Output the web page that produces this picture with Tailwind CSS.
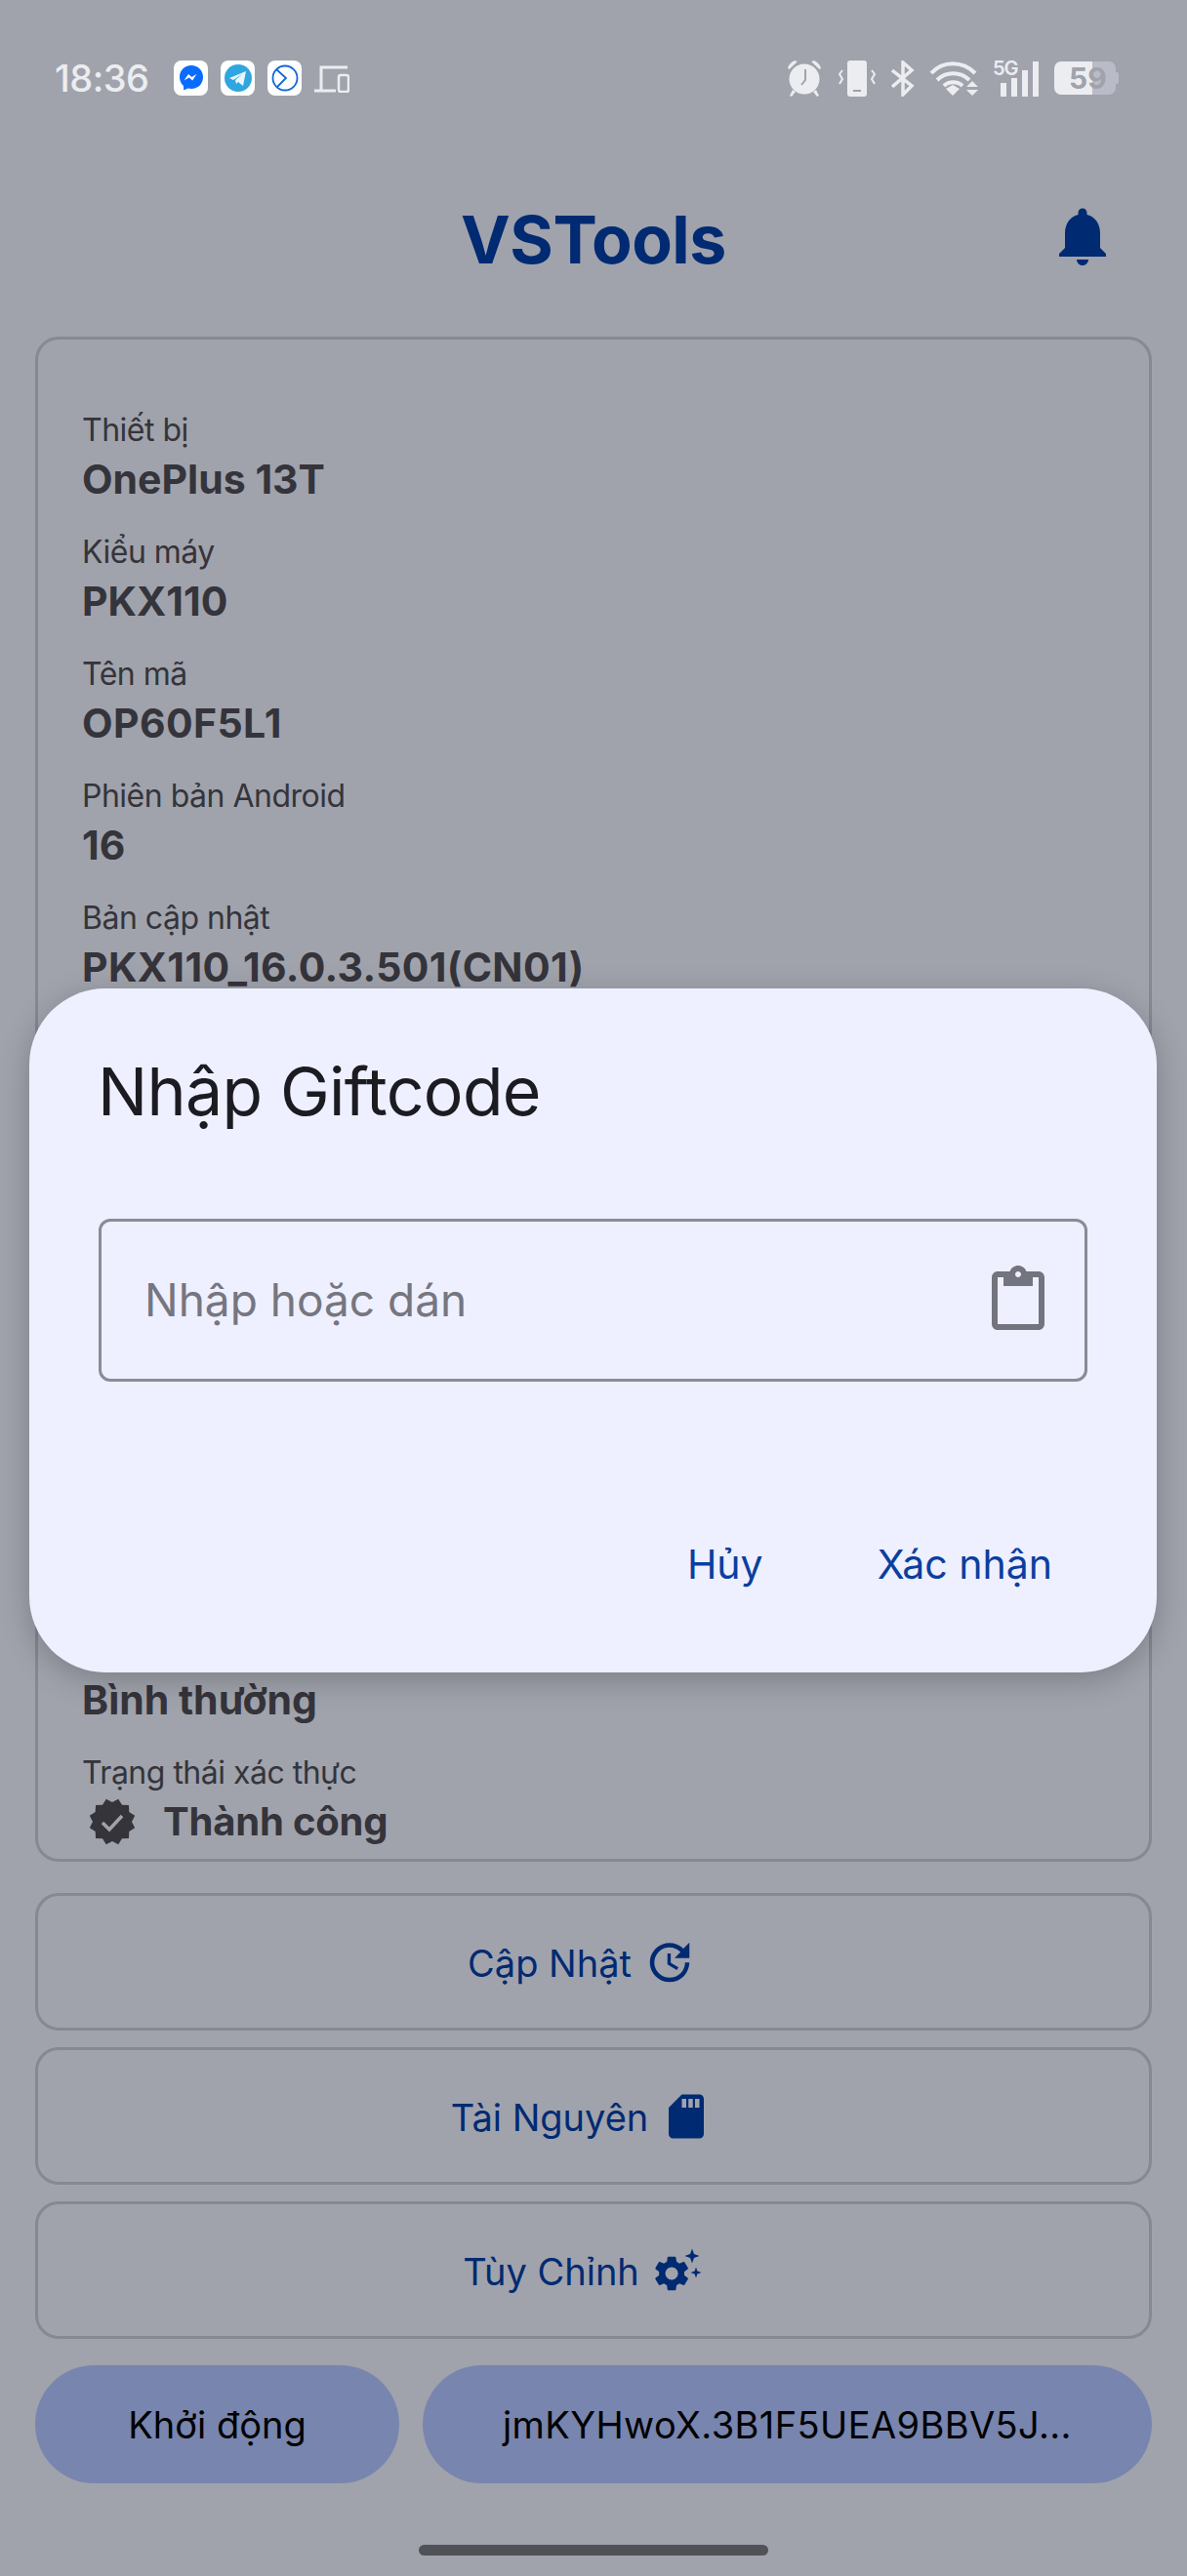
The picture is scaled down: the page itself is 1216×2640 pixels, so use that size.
<!DOCTYPE html>
<html lang="en">
<head>
    <meta charset="UTF-8">
    <meta name="viewport" content="width=device-width, initial-scale=1.0">
    <title>VSTools</title>
    <script src="https://cdn.jsdelivr.net/npm/@tailwindcss/browser@4"></script>
</head>
<body class="bg-[#a0a3ac] font-[Inter,sans-serif]">
<div class="relative w-[1216px] h-[2640px] overflow-hidden px-[36px]">

    <!-- Status bar -->
    <div class="h-[160px] flex items-center justify-between text-[#eceDf0] -mx-[36px] pl-[56px] pr-[70px]">
        <div class="flex items-center">
            <span class="text-[38px] font-medium leading-none w-[122px] tracking-[-0.5px]">18:36</span>
            <div class="flex items-center gap-[13px]">
                <div class="w-[35px] h-[36px] bg-white rounded-[8px] flex items-center justify-center">
                    <svg viewBox="0 0 26 28" class="w-[26px] h-[28px]"><path fill="#0a6cff" d="M13 1C6 1 1 6 1 13c0 3.700 1.500 6.800 4 9l.200 4.500 4.400-2c1.100.300 2.200.500 3.400.500 7 0 12-5 12-12S20 1 13 1z"/><path fill="#fff" d="M5.500 16.500 10 10l3.500 3 5-3.200-4.300 6.700-3.500-3z"/></svg>
                </div>
                <div class="w-[35px] h-[36px] bg-white rounded-[8px] flex items-center justify-center">
                    <svg viewBox="0 0 28 28" class="w-[28px] h-[28px]"><circle cx="14" cy="14" r="14" fill="#2fa6e0"/><path fill="#e8f5fc" d="M5 14 22 7l-3 15-5-4-2 2-1-4 7-6-9 6z"/></svg>
                </div>
                <div class="w-[35px] h-[36px] bg-white rounded-[8px] flex items-center justify-center">
                    <svg viewBox="0 0 28 30" class="w-[28px] h-[30px]" fill="none" stroke="#1467d6" stroke-width="1.800"><circle cx="14" cy="15" r="12.500"/><path d="M5 6l10 9-9 9"/></svg>
                </div>
                <svg viewBox="0 0 36 29" class="w-[36px] h-[29px]"><path fill="none" stroke="currentColor" stroke-width="3" d="M34 3H7v23"/><path fill="none" stroke="currentColor" stroke-width="3" d="M0 27h22"/><rect x="25" y="11" width="10" height="17" rx="2" fill="none" stroke="currentColor" stroke-width="2.500"/></svg>
            </div>
        </div>
        <div class="flex items-center">
            <svg viewBox="0 0 38 38" class="w-[38px] h-[38px]"><circle cx="19" cy="20" r="15.500" fill="currentColor"/><path d="M2 9c1-4 4-7 8-8l1.500 1.500L3.500 10zM36 9c-1-4-4-7-8-8l-1.500 1.500L34.500 10zM7 31l-3 6 2 1 4-5zM31 31l3 6-2 1-4-5z" fill="currentColor"/><path d="M20 10v11l-4 5" fill="none" stroke="#a0a3ac" stroke-width="2"/></svg>
            <svg viewBox="0 0 38 37" class="w-[38px] h-[37px] ml-[16px]"><rect x="9" y="0" width="20" height="37" rx="3" fill="currentColor"/><rect x="15" y="30" width="8" height="2" fill="#a0a3ac"/><path d="M4 10 1 14l3 5-3 5M34 10l3 4-3 5 3 5" fill="none" stroke="currentColor" stroke-width="2"/></svg>
            <svg viewBox="0 0 24 37" class="w-[24px] h-[37px] ml-[16px]"><path d="M1 10l20 16-9 9V2l9 8L1 27" fill="none" stroke="currentColor" stroke-width="3.500"/></svg>
            <svg viewBox="0 0 52 37" class="w-[52px] h-[37px] ml-[15px]"><path d="M2 13C14 0 34 0 47 13M8 20c9-9 24-9 33 0M15 26c5-5 14-5 19 0" fill="none" stroke="currentColor" stroke-width="4"/><path d="M17 29l7-4 7 4-7 7z" fill="currentColor"/><path d="M38 27l6-6 6 6zM38 30h12l-6 6z" fill="currentColor"/></svg>
            <div class="relative w-[47px] h-[37px] ml-[13px]">
                <span class="absolute -top-[2px] left-0 text-[20px] font-semibold leading-[20px] tracking-[-1px]">5G</span>
                <div class="absolute bottom-0 right-0 flex items-end gap-[5px]">
                    <div class="w-[6px] h-[14px] bg-current"></div>
                    <div class="w-[6px] h-[19px] bg-current"></div>
                    <div class="w-[6px] h-[27px] bg-current"></div>
                    <div class="w-[6px] h-[36px] bg-current"></div>
                </div>
            </div>
            <div class="relative w-[66px] h-[34px] ml-[16px] flex">
                <div class="w-[39px] h-full bg-[#eceDf0] rounded-l-[7px]"></div>
                <div class="w-[24px] h-full bg-[#b9bcc6] rounded-r-[7px]"></div>
                <div class="w-[3px] h-[12px] self-center bg-[#b9bcc6] rounded-r-[2px]"></div>
                <span class="absolute left-[15px] top-0 text-[30px] font-bold leading-[34px] text-[#a0a3ac]">59</span>
            </div>
        </div>
    </div>

    <!-- Header -->
    <div class="h-[170px] mb-[15px] grid grid-cols-[1fr_auto_1fr] items-center">
        <div></div>
        <h1 class="text-[68px] font-bold text-[#002a72] tracking-[-0.5px] leading-none">VSTools</h1>
        <div class="flex justify-end pr-[35px]">
            <svg viewBox="0 0 24 24" class="w-[72px] h-[72px] -mt-[6px]" fill="#002a72"><path d="M12 22c1.100 0 2-.9 2-2h-4c0 1.100.9 2 2 2zm6-6v-5c0-3.070-1.630-5.640-4.500-6.320V4c0-.83-.67-1.500-1.500-1.500s-1.500.67-1.500 1.500v.68C7.640 5.360 6 7.920 6 11v5l-2 2v1h16v-1l-2-2z"/></svg>
        </div>
    </div>

    <!-- Device info card -->
    <div class="h-[1563px] border-[3px] border-[#868892] rounded-[24px] pt-[68px] px-[45px] flex flex-col gap-[25px] text-[#35343b]">
        <div>
            <div class="text-[32px] leading-[50px] tracking-[-0.5px]">Thiết bị</div>
            <div class="text-[41px] font-bold leading-[50px]">OnePlus 13T</div>
        </div>
        <div>
            <div class="text-[32px] leading-[50px] tracking-[-0.5px]">Kiểu máy</div>
            <div class="text-[41px] font-bold leading-[50px]">PKX110</div>
        </div>
        <div>
            <div class="text-[32px] leading-[50px] tracking-[-0.5px]">Tên mã</div>
            <div class="text-[41px] font-bold leading-[50px] tracking-[0.4px]">OP60F5L1</div>
        </div>
        <div>
            <div class="text-[32px] leading-[50px] tracking-[-0.5px]">Phiên bản Android</div>
            <div class="text-[41px] font-bold leading-[50px]">16</div>
        </div>
        <div>
            <div class="text-[32px] leading-[50px] tracking-[-0.5px]">Bản cập nhật</div>
            <div class="text-[41px] font-bold leading-[50px] tracking-[0.35px]">PKX110_16.0.3.501(CN01)</div>
        </div>
        <!-- rows behind the dialog -->
        <div class="h-[726px] flex flex-col justify-end">
            <div class="text-[41px] font-bold leading-[50px]">Bình thường</div>
        </div>
        <div>
            <div class="text-[32px] leading-[48px] tracking-[-0.5px] mt-[1px]">Trạng thái xác thực</div>
            <div class="flex items-center gap-[27px] pl-[6px] mt-[1px]">
                <svg viewBox="0 0 48 48" class="w-[50px] h-[48px]"><polygon fill="#35343b" points="24,4 30.210,.82 34,6.680 40.970,7.030 41.320,14 47.180,17.790 44,24 47.180,30.210 41.320,34 40.970,40.970 34,41.320 30.210,47.180 24,44 17.790,47.180 14,41.320 7.030,40.970 6.680,34 .82,30.210 4,24 .82,17.790 6.680,14 7.030,7.030 14,6.680 17.790,.82"/><path d="M14 25l7 7 13-14" fill="none" stroke="#a0a3ac" stroke-width="3.500"/></svg>
                <span class="text-[40px] font-bold leading-[50px] tracking-[-0.2px]">Thành công</span>
            </div>
        </div>
    </div>

    <!-- Action buttons -->
    <div class="mt-[32px] flex flex-col gap-[17px] text-[#002a72] text-[38px]">
        <div class="h-[141px] border-[3px] border-[#868892] rounded-[24px] flex items-center justify-center gap-[12px] pr-[24px]">
            <span class="mt-[3px]">Cập Nhật</span>
            <svg viewBox="0 0 24 24" class="w-[54px] h-[54px]" fill="#002a72"><path d="M21 10.120h-6.780l2.740-2.820c-2.730-2.700-7.150-2.800-9.880-.1-2.730 2.710-2.730 7.080 0 9.790s7.150 2.710 9.880 0C18.320 15.650 19 14.080 19 12.100h2c0 1.980-.88 4.550-2.640 6.290-3.510 3.480-9.210 3.480-12.720 0-3.500-3.470-3.530-9.110-.02-12.580s9.140-3.470 12.650 0L21 3v7.120zM12.500 8v4.250l3.500 2.080-.72 1.210L11 13V8h1.500z"/></svg>
        </div>
        <div class="h-[141px] border-[3px] border-[#868892] rounded-[24px] flex items-center justify-center gap-[12px] pr-[24px]">
            <span class="mt-[3px]">Tài Nguyên</span>
            <svg viewBox="0 0 24 24" class="w-[54px] h-[54px]" fill="#002a72"><path d="M18 2h-8L4.020 8 4 20c0 1.100.9 2 2 2h12c1.100 0 2-.9 2-2V4c0-1.100-.9-2-2-2zm-6 6h-2V4h2v4zm3 0h-2V4h2v4zm3 0h-2V4h2v4z"/></svg>
        </div>
        <div class="h-[141px] border-[3px] border-[#868892] rounded-[24px] flex items-center justify-center gap-[12px] pr-[24px]">
            <span class="mt-[3px]">Tùy Chỉnh</span>
            <svg viewBox="0 0 54 54" class="w-[54px] h-[54px] -ml-[3px]" fill="#002a72">
                <g transform="translate(2.500 8.400) scale(1.800)"><path d="M19.140 12.940c.04-.3.06-.61.06-.94 0-.32-.02-.64-.07-.94l2.030-1.580c.18-.14.23-.41.12-.61l-1.920-3.320c-.12-.22-.37-.29-.59-.22l-2.390.96c-.5-.38-1.030-.7-1.620-.94l-.36-2.540c-.04-.24-.24-.41-.48-.41h-3.840c-.24 0-.43.17-.47.41l-.36 2.540c-.59.24-1.130.57-1.620.94l-2.390-.96c-.22-.08-.47 0-.59.22L2.740 8.870c-.12.21-.08.47.12.61l2.030 1.580c-.05.3-.09.63-.09.94s.02.64.07.94l-2.030 1.580c-.18.14-.23.41-.12.61l1.920 3.320c.12.22.37.29.59.22l2.390-.96c.5.38 1.030.7 1.620.94l.36 2.540c.05.24.24.41.48.41h3.840c.24 0 .44-.17.47-.41l.36-2.540c.59-.24 1.130-.56 1.620-.94l2.390.96c.22.08.47 0 .59-.22l1.920-3.320c.12-.22.07-.47-.12-.61l-2.010-1.580zM12 15.600c-1.980 0-3.600-1.620-3.600-3.600s1.620-3.600 3.600-3.600 3.600 1.620 3.600 3.600-1.620 3.600-3.600 3.600z"/></g>
                <path d="M45 4.500l2 5.500 5.500 2-5.500 2-2 5.500-2-5.500-5.500-2 5.500-2zM49 23.500l1.400 4.100 4.100 1.400-4.100 1.400-1.400 4.100-1.400-4.100-4.100-1.400 4.100-1.400z"/>
            </svg>
        </div>
    </div>

    <!-- Bottom pills -->
    <div class="mt-[27px] flex gap-[24px] text-[38px] text-black">
        <div class="w-[373px] h-[121px] shrink-0 bg-[#7885ae] rounded-full flex items-center justify-center"><span class="mt-[2px]">Khởi động</span></div>
        <div class="flex-1 h-[121px] bg-[#7885ae] rounded-full flex items-center justify-center tracking-[0.4px]"><span class="mt-[2px]">jmKYHwoX.3B1F5UEA9BBV5J...</span></div>
    </div>

    <!-- Home indicator -->
    <div class="mt-[63px] mx-auto w-[358px] h-[11px] rounded-full bg-[#515257]"></div>

    <!-- Dialog -->
    <div class="absolute left-[30px] top-[1013px] w-[1155px] h-[701px] bg-[#eef0ff] rounded-[78px] shadow-[0_8px_32px_rgba(0,0,0,0.22)] px-[71px] flex flex-col">
        <h2 class="mt-[60px] -ml-[1px] text-[68px] leading-[90px] text-[#1b1b21] tracking-[-0.7px]">Nhập Giftcode</h2>
        <div class="mt-[86px] h-[167px] border-[3px] border-[#8b8b98] rounded-[12px] flex items-center justify-between pl-[44px] pr-[32px]">
            <span class="text-[46px] text-[#76767f]">Nhập hoặc dán</span>
            <svg viewBox="0 0 24 24" class="w-[72px] h-[72px]" fill="#74747e"><path d="M19 2h-4.180C14.400.84 13.300 0 12 0c-1.300 0-2.400.84-2.820 2H5c-1.100 0-2 .9-2 2v16c0 1.100.9 2 2 2h14c1.100 0 2-.9 2-2V4c0-1.100-.9-2-2-2zm-7 0c.55 0 1 .45 1 1s-.45 1-1 1-1-.45-1-1 .45-1 1-1zm7 18H5V4h2v3h10V4h2v16z"/></svg>
        </div>
        <div class="mt-[162px] flex justify-end gap-[117px] pr-[36px] text-[41px] leading-[50px] text-[#0a3f9e]">
            <span>Hủy</span>
            <span>Xác nhận</span>
        </div>
    </div>
</div>
</body>
</html>
